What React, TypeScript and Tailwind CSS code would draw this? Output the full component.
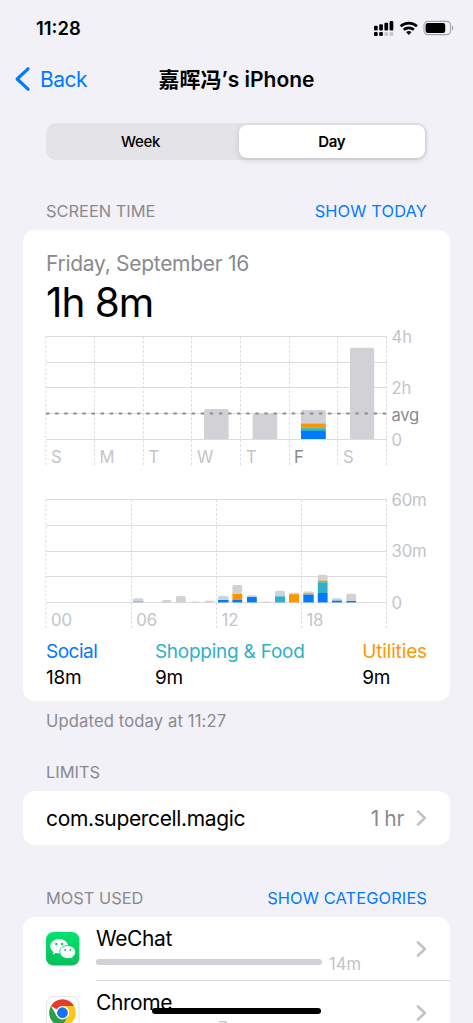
import clsx from "clsx";
import type { ReactNode } from "react";

const GRAY = "#d1d1d6";
const BLUE = "#007aff";
const TEAL = "#30b0c7";
const ORANGE = "#ff9500";
const LINE = "#dcdcde";

type Segment = { top: number; color: string };
type Bar = { x: number; width: number; segments: Segment[] };

// segments go from top to bottom, each one reaches down to the next
const weekBars: Bar[] = [
  { x: 204, width: 24.6, segments: [{ top: 409, color: GRAY }] },
  { x: 252.6, width: 24.6, segments: [{ top: 413.4, color: GRAY }] },
  {
    x: 301,
    width: 24.8,
    segments: [
      { top: 410, color: GRAY },
      { top: 423.4, color: ORANGE },
      { top: 428.2, color: TEAL },
      { top: 431, color: BLUE },
    ],
  },
  { x: 350, width: 24.2, segments: [{ top: 347.7, color: GRAY }] },
];

const dayBars: Bar[] = [
  {
    x: 133,
    width: 10.5,
    segments: [
      { top: 598.3, color: GRAY },
      { top: 600.8, color: "#95b8e4" },
    ],
  },
  { x: 162, width: 9.5, segments: [{ top: 600, color: GRAY }] },
  { x: 176, width: 9.6, segments: [{ top: 596, color: GRAY }] },
  { x: 191, width: 8.5, segments: [{ top: 601.4, color: GRAY }] },
  { x: 204.4, width: 9.6, segments: [{ top: 600.7, color: GRAY }] },
  {
    x: 218,
    width: 10.6,
    segments: [
      { top: 596, color: GRAY },
      { top: 600, color: BLUE },
    ],
  },
  {
    x: 232.4,
    width: 9.8,
    segments: [
      { top: 585, color: GRAY },
      { top: 594, color: ORANGE },
      { top: 600, color: BLUE },
    ],
  },
  {
    x: 247,
    width: 9.8,
    segments: [
      { top: 595.3, color: GRAY },
      { top: 597, color: BLUE },
    ],
  },
  { x: 262, width: 8, segments: [{ top: 601.4, color: GRAY }] },
  {
    x: 275,
    width: 10,
    segments: [
      { top: 590.8, color: GRAY },
      { top: 596.3, color: TEAL },
    ],
  },
  {
    x: 289,
    width: 10,
    segments: [
      { top: 592.8, color: GRAY },
      { top: 594.2, color: ORANGE },
    ],
  },
  {
    x: 303.3,
    width: 10.4,
    segments: [
      { top: 591.4, color: GRAY },
      { top: 593.3, color: ORANGE },
      { top: 594.6, color: BLUE },
    ],
  },
  {
    x: 317.8,
    width: 9.8,
    segments: [
      { top: 574.8, color: GRAY },
      { top: 580.5, color: ORANGE },
      { top: 582.2, color: TEAL },
      { top: 593, color: BLUE },
    ],
  },
  {
    x: 332,
    width: 10,
    segments: [
      { top: 598.2, color: GRAY },
      { top: 600.6, color: BLUE },
    ],
  },
  {
    x: 346.3,
    width: 9.8,
    segments: [
      { top: 593.7, color: GRAY },
      { top: 601, color: BLUE },
    ],
  },
];

const weekDays = [
  { x: 51, label: "S" },
  { x: 99.5, label: "M" },
  { x: 148.5, label: "T" },
  { x: 197, label: "W" },
  { x: 246, label: "T" },
  { x: 294, label: "F", active: true },
  { x: 343, label: "S" },
];

const hours = [
  { x: 51, label: "00" },
  { x: 136.3, label: "06" },
  { x: 221.5, label: "12" },
  { x: 306.4, label: "18" },
];

type ChartBarProps = { bar: Bar; bottom: number; radius: number };

const ChartBar = ({ bar, bottom, radius }: ChartBarProps) => {
  const { x, width, segments } = bar;
  const r = Math.min(radius, bottom - segments[0].top);

  return (
    <g>
      {segments.map(({ top, color }, i) =>
        i === 0 ? (
          <path
            key={top}
            fill={color}
            d={`M${x} ${segments[1]?.top ?? bottom}V${top + r}q0 ${-r} ${r} ${-r}h${width - 2 * r}q${r} 0 ${r} ${r}V${segments[1]?.top ?? bottom}z`}
          />
        ) : (
          <rect
            key={top}
            x={x}
            y={top}
            width={width}
            height={(segments[i + 1]?.top ?? bottom) - top}
            fill={color}
          />
        ),
      )}
    </g>
  );
};

type GridProps = { rows: number[]; columns: number[]; end: number };

const Grid = ({ rows, columns, end }: GridProps) => (
  <g stroke={LINE}>
    {rows.map((y) => (
      <path key={y} d={`M46 ${y}H387`} />
    ))}
    {columns.map((x) => (
      <path key={x} d={`M${x} ${rows[0]}V${end}`} strokeDasharray="2.6 1.9" />
    ))}
  </g>
);

const WeekChart = () => (
  <svg
    className="block h-[140px] w-[381px] overflow-visible text-[16.6px]"
    viewBox="46 330 381 140"
  >
    <Grid
      rows={[336.5, 362.5, 387.5, 413.5, 439.5]}
      columns={[45.8, 94.5, 143.4, 191.5, 240.5, 289.5, 337.6, 386.5]}
      end={467}
    />
    {weekBars.map((bar) => (
      <ChartBar key={bar.x} bar={bar} bottom={439} radius={2} />
    ))}
    <path
      d="M46 413.5H387"
      stroke="#8e8e93"
      strokeWidth="1.8"
      strokeDasharray="3.4 5.7"
    />
    {weekDays.map(({ x, label, active }) => (
      <text key={x} x={x} y={463} fill={active ? "#8a8a8e" : "#c4c4c6"}>
        {label}
      </text>
    ))}
    <g fill="#c4c4c6">
      <text x={391.5} y={343}>
        4h
      </text>
      <text x={391.5} y={394.3}>
        2h
      </text>
      <text x={391.5} y={445.5}>
        0
      </text>
    </g>
    <text x={391.5} y={420.6} fill="#8a8a8e" letterSpacing="-0.3">
      avg
    </text>
  </svg>
);

const DayChart = () => (
  <svg
    className="block h-[140px] w-[381px] overflow-visible text-[16.8px]"
    viewBox="46 493 381 140"
  >
    <Grid
      rows={[499.5, 525.5, 551.5, 576.5, 602.5]}
      columns={[45.8, 131.4, 216.5, 301.5, 386.5]}
      end={630}
    />
    {dayBars.map((bar) => (
      <ChartBar key={bar.x} bar={bar} bottom={602.4} radius={1.8} />
    ))}
    <g fill="#c4c4c6" letterSpacing="-0.2">
      {hours.map(({ x, label }) => (
        <text key={x} x={x} y={625.6}>
          {label}
        </text>
      ))}
      <text x={391.5} y={506}>
        60m
      </text>
      <text x={391.5} y={557.3}>
        30m
      </text>
      <text x={391.5} y={608.7}>
        0
      </text>
    </g>
  </svg>
);

const Chevron = () => (
  <svg className="h-4 w-[11px]" viewBox="0 0 11 16" fill="none">
    <path
      d="M2 1.5 8.9 8 2 14.5"
      stroke="#c4c4c6"
      strokeWidth="2.6"
      strokeLinecap="round"
      strokeLinejoin="round"
    />
  </svg>
);

const StatusBar = () => (
  <div className="flex h-14 items-center justify-between pl-9 pr-[19px]">
    <div className="text-[18.4px] font-semibold leading-none">11:28</div>
    <svg className="h-4 w-20" viewBox="374 20 80 16">
      <rect x="374" y="25.7" width="3.7" height="4.8" rx="1" />
      <rect x="379.2" y="24.3" width="3.7" height="6.2" rx="1" />
      <rect x="384.4" y="22.8" width="3.7" height="7.7" rx="1" />
      <rect x="389.6" y="21" width="3.7" height="9.5" rx="1" />
      <rect x="374" y="32" width="3.7" height="4" rx="1" />
      <rect x="379.2" y="32" width="3.7" height="4" rx="1" />
      <rect x="384.4" y="32" width="3.7" height="4" rx="1" fill="#c9c9cd" />
      <rect x="389.6" y="32" width="3.7" height="4" rx="1" fill="#c9c9cd" />
      <g fill="none" stroke="#000" strokeWidth="2.6">
        <path d="M400.6 26.3a12.2 12.2 0 0 1 16.4 0" />
        <path d="M403.7 29.8a7.6 7.6 0 0 1 10.2 0" />
      </g>
      <path d="m408.8 34.9-2.6-2.6a3.8 3.8 0 0 1 5.2 0z" />
      <rect
        x="424"
        y="21.4"
        width="26.6"
        height="13.2"
        rx="3.8"
        fill="none"
        stroke="#a4a4a8"
        strokeWidth="1.1"
      />
      <rect x="425.6" y="23" width="19.6" height="10" rx="2.2" />
      <path d="M452 25.8c1.8.5 1.8 4.1 0 4.6z" fill="#a4a4a8" />
    </svg>
  </div>
);

const NavBar = () => (
  <div className="mt-0.5 grid h-[42px] grid-cols-[1fr_auto_1fr] items-center px-[15px]">
    <div className="flex items-center gap-[10px] text-[#007aff]">
      <svg className="h-6 w-[15px]" viewBox="0 0 15 24" fill="none">
        <path
          d="M13 1.8 2.2 12 13 22.2"
          stroke="currentColor"
          strokeWidth="3.2"
          strokeLinecap="round"
          strokeLinejoin="round"
        />
      </svg>
      <span className="text-[21px] leading-none tracking-[-0.5px]">Back</span>
    </div>
    <h1 className="whitespace-nowrap text-[21px] font-semibold leading-none">
      嘉晖冯’s iPhone
    </h1>
  </div>
);

const Segmented = () => (
  <div className="mx-[46px] flex h-[37px] justify-between rounded-[10px] bg-[#e3e3e8] p-[2px] text-[15px] tracking-[-0.3px]">
    <div className="flex w-[185px] items-center justify-center pt-[2px] font-medium">
      Week
    </div>
    <div className="flex w-[186.5px] items-center justify-center rounded-[8px] bg-white pt-[2px] font-semibold shadow-[0_2px_6px_rgba(0,0,0,0.14)]">
      Day
    </div>
  </div>
);

type SectionHeaderProps = { title: string; action?: string };

const SectionHeader = ({ title, action }: SectionHeaderProps) => (
  <div className="flex h-5 items-center justify-between px-[46px] text-[16.4px]">
    <div className="text-[#8a8a8e]">{title}</div>
    {action && <div className="tracking-[0.12px] text-[#007aff]">{action}</div>}
  </div>
);

type CardProps = { className?: string; children: ReactNode };

const Card = ({ className, children }: CardProps) => (
  <div className={clsx("mx-[23px] bg-white", className)}>{children}</div>
);

const WeChatIcon = () => (
  <svg className="size-[34px]" viewBox="0 0 34 34">
    <defs>
      <linearGradient id="wechat" x2="0" y2="1">
        <stop stopColor="#04e36f" />
        <stop offset="1" stopColor="#06bf5c" />
      </linearGradient>
    </defs>
    <rect width="33.4" height="33.4" rx="7.5" fill="url(#wechat)" />
    <path
      fill="#fff"
      d="M13.2 7C8.2 7 4.3 10.2 4.3 14.3c0 2.3 1.2 4.3 3.2 5.7L6.9 22.5l3-1.5c1 .3 2.1.5 3.3.5 5 0 8.9-3.2 8.9-7.2S18.200 7 13.200 7z"
    />
    <path
      fill="#fff"
      stroke="#06cf64"
      strokeWidth="0.9"
      d="M21.7 13.5c-4.4 0-7.9 2.9-7.9 6.5s3.5 6.5 7.9 6.5c1 0 1.9-.2 2.8-.4l2.5 1.3-.6-2.2c1.9-1.2 3.1-3 3.1-5.2 0-3.6-3.5-6.5-7.8-6.5z"
    />
    <g fill="#06cf64">
      <circle cx="10.3" cy="12" r="1.2" />
      <circle cx="16.1" cy="12" r="1.2" />
      <circle cx="19.2" cy="18" r="1" />
      <circle cx="24.3" cy="18" r="1" />
    </g>
  </svg>
);

const ChromeIcon = () => (
  <svg className="size-[34px]" viewBox="0 0 34 34">
    <rect
      x="0.4"
      y="0.4"
      width="32.6"
      height="32.6"
      rx="7.5"
      fill="#fff"
      stroke="#dedee0"
      strokeWidth="0.9"
    />
    <path d="M16.5 16.7 4.9 10A13.4 13.4 0 0 1 28.1 10z" fill="#e33b2e" />
    <path
      d="M4.9 10a13.4 13.4 0 0 0 11.6 20.1l5.8-10.05L16.5 16.7l-5.8 3.35z"
      fill="#2b9f48"
    />
    <path
      d="M28.1 10a13.4 13.4 0 0 1-11.6 20.1l5.8-10.05L16.5 10z"
      fill="#fdc61d"
    />
    <circle cx="16.5" cy="16.7" r="6.7" fill="#fff" />
    <circle cx="16.5" cy="16.7" r="5.4" fill="#1a73e8" />
  </svg>
);

const legend = [
  {
    name: "Social",
    time: "18m",
    color: "tracking-[-0.5px] text-[#007aff]",
  },
  {
    name: "Shopping & Food",
    time: "9m",
    color: "tracking-[-0.25px] text-[#30b0c7]",
  },
  {
    name: "Utilities",
    time: "9m",
    color: "tracking-[-0.14px] text-[#ff9500]",
  },
];

const apps = [
  { name: "WeChat", time: "14m", bar: "w-[226px]", Icon: WeChatIcon },
  { name: "Chrome", time: "7m", bar: "w-[115px]", Icon: ChromeIcon },
];

const App = () => (
  <div className="relative h-[1023px] w-[473px] overflow-hidden bg-[#f2f1f7] font-['Inter','Noto_Sans_CJK_SC',sans-serif] text-black">
    <StatusBar />
    <NavBar />
    <div className="mt-[23px]">
      <Segmented />
    </div>

    <div className="mt-[41px]">
      <SectionHeader title="SCREEN TIME" action="SHOW TODAY" />
    </div>
    <Card className="mt-[9px] h-[471px] rounded-[12px] px-[23px] pt-5">
      <div className="h-7 text-[21px] leading-7 tracking-[-0.28px] text-[#8a8a8e]">
        Friday, September 16
      </div>
      <div className="h-[52px] text-[40.5px] leading-[50px] tracking-[-1px]">
        1h 8m
      </div>
      <WeekChart />
      <div className="mt-[23px]">
        <DayChart />
      </div>
      <div className="mt-[6px] flex justify-between text-[19px] leading-[26px]">
        {legend.map(({ name, time, color }) => (
          <div key={name}>
            <div className={color}>{name}</div>
            <div className="tracking-[-0.3px]">{time}</div>
          </div>
        ))}
      </div>
    </Card>
    <div className="mt-[10px] h-5 px-[46px] text-[16.6px] leading-[21px] tracking-[0.13px] text-[#8a8a8e]">
      Updated today at 11:27
    </div>

    <div className="mt-[31px]">
      <SectionHeader title="LIMITS" />
    </div>
    <Card className="mt-[9px] flex h-[54px] items-center rounded-[12px] px-[23px] text-[21px] tracking-[-0.35px]">
      <div className="pt-[2px]">com.supercell.magic</div>
      <div className="ml-auto mr-3 pt-[2px] text-[#8a8a8e]">1 hr</div>
      <Chevron />
    </Card>

    <div className="mt-[43px]">
      <SectionHeader title="MOST USED" action="SHOW CATEGORIES" />
    </div>
    <Card className="mt-[9px] rounded-t-[12px] pl-[23px]">
      {apps.map(({ name, time, bar, Icon }) => (
        <div key={name} className="flex h-16 items-center">
          <Icon />
          <div className="ml-4 flex h-full flex-1 items-center border-b border-[#dcdcde] pr-[23px]">
            <div className="flex-1 pb-[2px]">
              <div className="h-[29px] pt-px text-[21px] leading-[30px] tracking-[-0.4px]">
                {name}
              </div>
              <div className="flex h-5 items-center gap-[7px]">
                <div className={clsx("h-[6px] rounded-full bg-[#d1d1d6]", bar)} />
                <div className="pt-[3px] text-[16.6px] leading-5 text-[#c4c4c6]">
                  {time}
                </div>
              </div>
            </div>
            <Chevron />
          </div>
        </div>
      ))}
    </Card>

    {/* home indicator */}
    <div className="absolute left-[152px] top-[1008px] h-[6px] w-[169px] rounded-full bg-black" />
  </div>
);

export default App;
